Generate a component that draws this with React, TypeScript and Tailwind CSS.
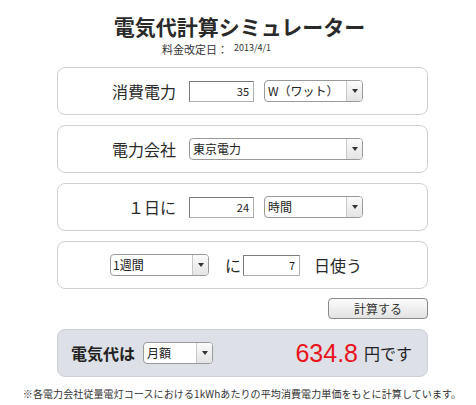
import React from "react";

const font = { fontFamily: '"Noto Sans CJK JP", "Noto Sans", sans-serif' };

function Arrow() {
  return (
    <div className="flex h-full w-[16px] items-center justify-center border-l border-[#c8c8c8] bg-gradient-to-b from-[#fbfbfb] to-[#e4e4e4]">
      <div className="h-0 w-0 border-x-[3px] border-t-[4px] border-x-transparent border-t-[#333]" />
    </div>
  );
}

function Select({ w, text, pad = "pl-[3px]" }: { w: string; text: string; pad?: string }) {
  return (
    <div className={`flex h-[22px] ${w} items-stretch overflow-hidden rounded-[4px] border border-[#9a9a9a] bg-white`}>
      <div className={`flex flex-1 items-center ${pad} text-[12px] leading-none text-[#222]`}>{text}</div>
      <Arrow />
    </div>
  );
}

function NumInput({ w, value }: { w: string; value: string }) {
  return (
    <div className={`flex h-[21px] ${w} items-center justify-end border border-[#b0b0b0] border-l-[#7c7c7c] border-t-[#7c7c7c] bg-white pr-[4px] text-[11px] leading-none text-[#222]`}>
      {value}
    </div>
  );
}

function Card({ children, className = "" }: { children: React.ReactNode; className?: string }) {
  return (
    <div className={`flex h-[48px] w-[371px] items-center rounded-[8px] border border-[#cfcfcf] bg-white ${className}`}>
      {children}
    </div>
  );
}

export default function App() {
  return (
    <div className="w-[476px] h-[405px] bg-white text-[#333]" style={font}>
      <div className="pt-[16px]">
        <div className="text-center pl-[3px] text-[21px] font-bold leading-[21px] text-[#2a2a2a]">電気代計算シミュレーター</div>
        <div className="ml-[162px] mt-[5px] flex items-start">
          <span className="text-[11px] leading-[14px] text-[#333]">料金改定日：</span>
          <span className="ml-[6px] text-[9px] leading-[11px] text-[#333]">2013/4/1</span>
        </div>
      </div>

      <div className="ml-[57px] mt-[11px] flex flex-col gap-[10px]">
        <Card>
          <div className="w-[118px] text-right text-[16px] leading-none text-[#2a2a2a]">消費電力</div>
          <div className="ml-[13px]"><NumInput w="w-[65px]" value="35" /></div>
          <div className="ml-[10px]"><Select w="w-[99px]" text="W（ワット）" /></div>
        </Card>
        <Card>
          <div className="w-[118px] text-right text-[16px] leading-none text-[#2a2a2a]">電力会社</div>
          <div className="ml-[13px]"><Select w="w-[174px]" text="東京電力" /></div>
        </Card>
        <Card>
          <div className="w-[118px] text-right text-[16px] leading-none text-[#2a2a2a]">１日に</div>
          <div className="ml-[13px]"><NumInput w="w-[65px]" value="24" /></div>
          <div className="ml-[10px]"><Select w="w-[99px]" text="時間" /></div>
        </Card>
        <Card>
          <div className="ml-[52px]"><Select w="w-[99px]" text="1週間" pad="pl-[2px]" /></div>
          <div className="ml-[16px] text-[16px] leading-none text-[#2a2a2a]">に</div>
          <div className="ml-[2px]"><NumInput w="w-[57px]" value="7" /></div>
          <div className="ml-[14px] text-[16px] leading-none text-[#2a2a2a]">日使う</div>
        </Card>
      </div>

      <div className="ml-[57px] mt-[9px] flex w-[371px] justify-end">
        <button className="flex h-[21px] w-[100px] items-center justify-center rounded-[4px] border border-[#8a8a8a] bg-gradient-to-b from-[#fcfcfc] to-[#e2e2e2] text-[12px] leading-none text-[#333]">
          計算する
        </button>
      </div>

      <div className="ml-[57px] mt-[10px] flex h-[48px] w-[371px] items-center rounded-[8px] border border-[#cdd0d6] bg-[#dde0e6]">
        <div className="ml-[13px] text-[16px] font-bold leading-none text-[#222]">電気代は</div>
        <div className="ml-[8px]"><Select w="w-[70px]" text="月額" /></div>
        <div className="ml-auto text-[25px] leading-none text-[#e8141c]" style={{ fontFamily: '"Liberation Sans", Arial, sans-serif' }}>634.8</div>
        <div className="ml-[6px] mr-[15px] text-[16px] leading-none text-[#222]">円です</div>
      </div>

      <div className="mt-[11px] pl-[8px] text-center text-[10px] leading-[12px] tracking-[0.1px] text-[#333]">
        ※各電力会社従量電灯コースにおける1kWhあたりの平均消費電力単価をもとに計算しています。
      </div>
    </div>
  );
}
